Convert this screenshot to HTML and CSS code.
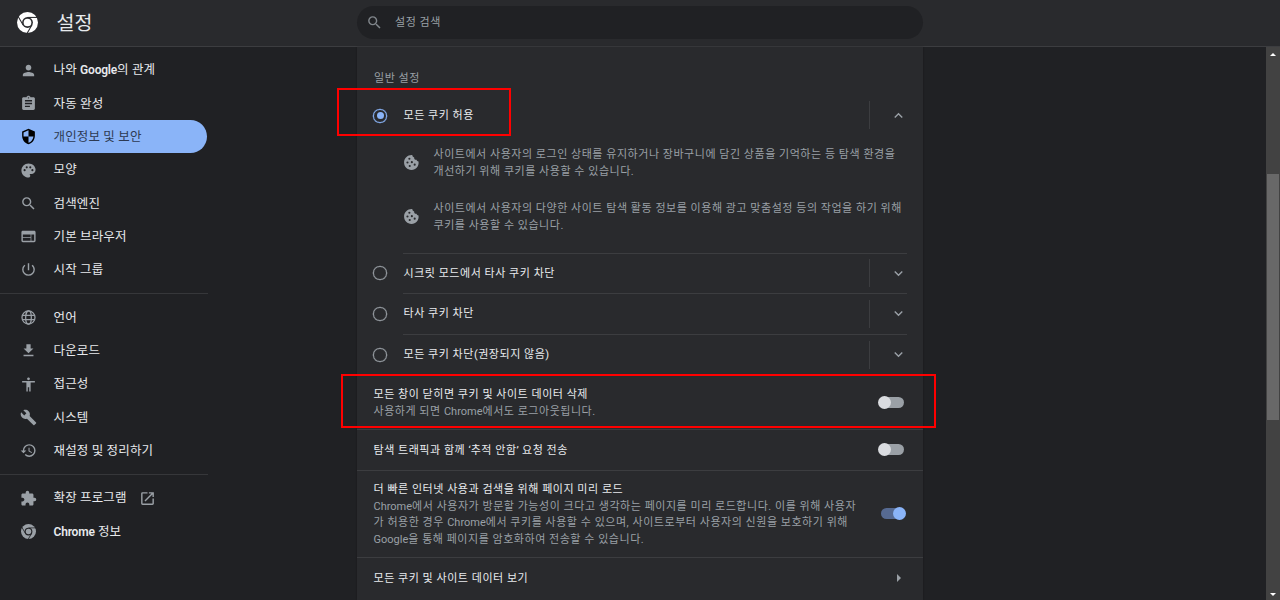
FILE: index.html
```html
<!DOCTYPE html>
<html lang="ko">
<head>
  <meta charset="utf-8" />
  <title>설정</title>
  <link rel="stylesheet" href="styles.css">
</head>
<body>
  <svg class="defs" width="0" height="0">
    <symbol id="chrome" viewBox="0 0 24 24">
      <mask id="seams">
        <circle cx="12" cy="12" r="12" fill="#fff"/>
        <g stroke="#000" stroke-width="1.200">
          <path d="M12 6.200H24"/>
          <path d="M12 6.200H24" transform="rotate(120 12 12)"/>
          <path d="M12 6.200H24" transform="rotate(240 12 12)"/>
        </g>
        <circle cx="12" cy="12" r="6.200" fill="#000"/>
        <circle cx="12" cy="12" r="4.400" fill="#fff"/>
      </mask>
      <rect width="24" height="24" mask="url(#seams)"/>
    </symbol>
    <symbol id="search" viewBox="0 0 24 24"><path d="M15.5 14h-.79l-.28-.27A6.471 6.471 0 0 0 16 9.5 6.5 6.5 0 1 0 9.5 16c1.61 0 3.09-.59 4.23-1.57l.27.28v.79l5 4.99L20.49 19l-4.99-5zm-6 0C7.01 14 5 11.99 5 9.5S7.01 5 9.5 5 14 7.01 14 9.5 11.99 14 9.5 14z"/></symbol>
    <symbol id="cookie" viewBox="0 0 24 24"><path fill-rule="evenodd" d="M21.9 10.5c-1.3 0-2.5-.9-2.8-2.3-2 .4-3.7-1.300-3.300-3.300-1.700-.3-2.800-1.700-2.600-3.400C6.900.9 1.500 5.800 1.500 12c0 5.800 4.700 10.500 10.500 10.500 6.100 0 11-5.400 9.900-12zM9 5.200a1.500 1.500 0 1 1 0 3 1.500 1.500 0 0 1 0-3zM6.300 10.500a1.500 1.500 0 1 1 0 3 1.500 1.500 0 0 1 0-3zM12.500 10a1.500 1.500 0 1 1 0 3 1.500 1.500 0 0 1 0-3zM9.500 15.500a1.500 1.500 0 1 1 0 3 1.500 1.500 0 0 1 0-3zM16.500 13.500a1.500 1.500 0 1 1 0 3 1.500 1.500 0 0 1 0-3z"/></symbol>
    <symbol id="down" viewBox="0 0 24 24"><path d="M16.590 8.590 12 13.170 7.410 8.590 6 10l6 6 6-6z"/></symbol>
  </svg>

  <header class="toolbar">
    <div class="brand">
      <svg class="logo"><use href="#chrome"/></svg>
      <h1>설정</h1>
    </div>
    <div class="search">
      <svg class="icon"><use href="#search"/></svg>
      <span>설정 검색</span>
    </div>
  </header>

  <div class="container">
    <nav class="menu">
      <a class="item"><svg class="icon" viewBox="0 0 24 24"><path d="M12 12c2.210 0 4-1.790 4-4s-1.790-4-4-4-4 1.790-4 4 1.790 4 4 4zm0 2c-2.670 0-8 1.340-8 4v2h16v-2c0-2.660-5.330-4-8-4z"/></svg><span>나와 <b>Google</b>의 관계</span></a>
      <a class="item"><svg class="icon" viewBox="0 0 24 24"><path d="M19 3h-4.180C14.400 1.840 13.300 1 12 1s-2.400.84-2.820 2H5c-1.100 0-2 .9-2 2v14c0 1.100.9 2 2 2h14c1.100 0 2-.9 2-2V5c0-1.100-.9-2-2-2zm-7 0c.55 0 1 .45 1 1s-.45 1-1 1-1-.45-1-1 .45-1 1-1zm2 14H7v-2h7v2zm3-4H7v-2h10v2zm0-4H7V7h10v2z"/></svg><span>자동 완성</span></a>
      <a class="item selected"><svg class="icon" viewBox="0 0 24 24"><path d="M12 1 3 5v6c0 5.550 3.840 10.740 9 12 5.160-1.260 9-6.450 9-12V5l-9-4zm0 10.990h7c-.53 4.120-3.280 7.790-7 8.940V12H5V6.300l7-3.110v8.800z"/></svg><span>개인정보 및 보안</span></a>
      <a class="item"><svg class="icon" viewBox="0 0 24 24"><path d="M12 2C6.490 2 2 6.490 2 12s4.490 10 10 10c1.380 0 2.500-1.120 2.500-2.500 0-.61-.23-1.200-.64-1.670-.08-.1-.13-.21-.13-.33 0-.28.22-.5.5-.5H16c3.310 0 6-2.690 6-6 0-4.960-4.490-9-10-9zM6.500 13a1.500 1.500 0 1 1 0-3 1.500 1.500 0 0 1 0 3zm3-4a1.500 1.500 0 1 1 0-3 1.500 1.500 0 0 1 0 3zm5 0a1.500 1.500 0 1 1 0-3 1.500 1.500 0 0 1 0 3zm3 4a1.500 1.500 0 1 1 0-3 1.500 1.500 0 0 1 0 3z"/></svg><span>모양</span></a>
      <a class="item"><svg class="icon"><use href="#search"/></svg><span>검색엔진</span></a>
      <a class="item"><svg class="icon" viewBox="0 0 24 24"><path d="M20 4H4c-1.100 0-1.990.9-1.990 2L2 18c0 1.100.9 2 2 2h16c1.100 0 2-.9 2-2V6c0-1.100-.9-2-2-2zm-5 14H4v-4h11v4zm0-5H4V9h11v4zm5 5h-4V9h4v9z"/></svg><span>기본 브라우저</span></a>
      <a class="item"><svg class="icon" viewBox="0 0 24 24"><path d="M13 3h-2v10h2V3zm4.830 2.170-1.420 1.420A6.920 6.920 0 0 1 19 12c0 3.870-3.130 7-7 7s-7-3.130-7-7c0-2.190 1.010-4.140 2.580-5.420L6.170 5.170A8.932 8.932 0 0 0 3 12a9 9 0 0 0 18 0c0-2.740-1.230-5.180-3.170-6.830z"/></svg><span>시작 그룹</span></a>
      <div class="separator"></div>
      <a class="item"><svg class="icon" viewBox="0 0 24 24"><g fill="none" stroke="currentColor" stroke-width="1.800"><circle cx="12" cy="12" r="9.200"/><ellipse cx="12" cy="12" rx="4" ry="9.200"/><path d="M3.500 9h17M3.500 15h17"/></g></svg><span>언어</span></a>
      <a class="item"><svg class="icon" viewBox="0 0 24 24"><path d="M19 9h-4V3H9v6H5l7 7 7-7zM5 18v2h14v-2H5z"/></svg><span>다운로드</span></a>
      <a class="item"><svg class="icon" viewBox="0 0 24 24"><path d="M12 2c1.100 0 2 .9 2 2s-.9 2-2 2-2-.9-2-2 .9-2 2-2zm9 7h-6v13h-2v-6h-2v6H9V9H3V7h18v2z"/></svg><span>접근성</span></a>
      <a class="item"><svg class="icon" viewBox="0 0 24 24"><path d="m22.700 19-9.100-9.100c.9-2.300.4-5-1.500-6.900-2-2-5-2.400-7.400-1.300L9 6 6 9 1.600 4.700C.4 7.100.9 10.100 2.900 12.100c1.900 1.900 4.600 2.400 6.900 1.500l9.100 9.100c.4.4 1 .4 1.400 0l2.300-2.300c.5-.4.5-1.100.1-1.400z"/></svg><span>시스템</span></a>
      <a class="item"><svg class="icon" viewBox="0 0 24 24"><path d="M13 3a9 9 0 0 0-9 9H1l3.890 3.890.07.14L9 12H6c0-3.870 3.130-7 7-7s7 3.130 7 7-3.130 7-7 7c-1.930 0-3.680-.79-4.940-2.060l-1.420 1.420A8.954 8.954 0 0 0 13 21a9 9 0 0 0 0-18zm-1 5v5l4.280 2.540.72-1.210-3.500-2.080V8H12z"/></svg><span>재설정 및 정리하기</span></a>
      <div class="separator"></div>
      <a class="item"><svg class="icon" viewBox="0 0 24 24"><path d="M20.500 11H19V7c0-1.100-.9-2-2-2h-4V3.500a2.500 2.500 0 0 0-5 0V5H4c-1.100 0-1.990.9-1.990 2v3.800H3.500c1.490 0 2.700 1.210 2.700 2.700s-1.210 2.700-2.700 2.700H2V20c0 1.100.9 2 2 2h3.800v-1.500c0-1.490 1.210-2.700 2.700-2.700s2.700 1.210 2.700 2.700V22H17c1.100 0 2-.9 2-2v-4h1.500a2.500 2.500 0 0 0 0-5z"/></svg><span>확장 프로그램</span><svg class="icon launch" viewBox="0 0 24 24"><path d="M19 19H5V5h7V3H5a2 2 0 0 0-2 2v14a2 2 0 0 0 2 2h14c1.100 0 2-.9 2-2v-7h-2v7zM14 3v2h3.590l-9.830 9.830 1.410 1.410L19 6.410V10h2V3h-7z"/></svg></a>
      <a class="item"><svg class="icon product"><use href="#chrome"/></svg><span><b>Chrome</b> 정보</span></a>
    </nav>

    <main class="card">
      <h2>일반 설정</h2>

      <div class="option first">
        <span class="radio checked"></span>
        <div class="option-body"><span>모든 쿠키 허용</span><div class="expand"><svg class="icon up"><use href="#down"/></svg></div></div>
      </div>
      <div class="details">
        <div class="detail"><svg class="icon"><use href="#cookie"/></svg><p>사이트에서 사용자의 로그인 상태를 유지하거나 장바구니에 담긴 상품을 기억하는 등 탐색 환경을<br>개선하기 위해 쿠키를 사용할 수 있습니다.</p></div>
        <div class="detail"><svg class="icon"><use href="#cookie"/></svg><p>사이트에서 사용자의 다양한 사이트 탐색 활동 정보를 이용해 광고 맞춤설정 등의 작업을 하기 위해<br>쿠키를 사용할 수 있습니다.</p></div>
      </div>
      <div class="option">
        <span class="radio"></span>
        <div class="option-body"><span>시크릿 모드에서 타사 쿠키 차단</span><div class="expand"><svg class="icon"><use href="#down"/></svg></div></div>
      </div>
      <div class="option">
        <span class="radio"></span>
        <div class="option-body"><span>타사 쿠키 차단</span><div class="expand"><svg class="icon"><use href="#down"/></svg></div></div>
      </div>
      <div class="option last">
        <span class="radio"></span>
        <div class="option-body"><span>모든 쿠키 차단(권장되지 않음)</span><div class="expand"><svg class="icon"><use href="#down"/></svg></div></div>
      </div>

      <div class="row clear">
        <div>
          <h3>모든 창이 닫히면 쿠키 및 사이트 데이터 삭제</h3>
          <p>사용하게 되면 <i>Chrome</i>에서도 로그아웃됩니다.</p>
        </div>
        <span class="toggle"></span>
      </div>
      <div class="row track">
        <h3>탐색 트래픽과 함께 <i>‘</i>추적 안함<i>’</i> 요청 전송</h3>
        <span class="toggle"></span>
      </div>
      <div class="row preload">
        <div>
          <h3>더 빠른 인터넷 사용과 검색을 위해 페이지 미리 로드</h3>
          <p><i>Chrome</i>에서 사용자가 방문할 가능성이 크다고 생각하는 페이지를 미리 로드합니다. 이를 위해 사용자<br>가 허용한 경우 <i>Chrome</i>에서 쿠키를 사용할 수 있으며, 사이트로부터 사용자의 신원을 보호하기 위해<br><i>Google</i>을 통해 페이지를 암호화하여 전송할 수 있습니다.</p>
        </div>
        <span class="toggle on"></span>
      </div>
      <div class="row link">
        <h3>모든 쿠키 및 사이트 데이터 보기</h3>
        <svg class="arrow" viewBox="0 0 4 8"><path d="M0 0 4 4 0 8z"/></svg>
      </div>
    </main>

    <div class="scrollbar">
      <svg class="scroll-arrow" viewBox="0 0 6 3"><path d="M0 3 3 0 6 3z"/></svg>
      <div class="thumb"></div>
      <svg class="scroll-arrow" viewBox="0 0 6 3"><path d="M0 0 3 3 6 0z"/></svg>
    </div>
  </div>

  <div class="mark mark-allow"></div>
  <div class="mark mark-clear"></div>
</body>
</html>
```
FILE: styles.css
```css
* {
  box-sizing: border-box;
}
body {
  margin: 0;
  height: 600px;
  overflow: hidden;
  position: relative;
  background: #202124;
  color: #e8eaed;
  font-family: Roboto, "Noto Sans CJK KR", sans-serif;
  font-size: 11px;
  line-height: 16.6px;
  letter-spacing: 0.53px;
}
h1, h2, h3, p {
  margin: 0;
  font-size: inherit;
  font-weight: normal;
}
i {
  font-style: normal;
  letter-spacing: 0;
}
.defs {
  position: absolute;
}
.icon {
  width: 17px;
  height: 17px;
  flex: none;
  fill: currentColor;
  color: #9aa0a6;
}

/* toolbar */
.toolbar {
  display: flex;
  height: 47px;
  background: #292a2d;
  border-bottom: 1px solid #3c3d40;
}
.brand {
  display: flex;
  align-items: center;
  width: 357px;
  padding-left: 17px;
}
.logo {
  width: 21px;
  height: 21px;
  margin-bottom: 1px;
  fill: #fff;
}
.brand h1 {
  margin-left: 18.500px;
  padding-top: 2px;
  font-size: 19.500px;
  line-height: 28px;
  letter-spacing: 0;
}
.search {
  display: flex;
  align-items: center;
  width: 566px;
  height: 33px;
  margin-top: 6px;
  padding-left: 9px;
  border-radius: 17px;
  background: #202124;
  color: #9aa0a6;
}
.search .icon {
  color: #80868b;
}
.search span {
  margin-left: 12px;
  padding-top: 2px;
}

.container {
  display: flex;
  height: 553px;
}

/* left menu */
.menu {
  width: 357px;
  padding-top: 6.500px;
  font-size: 12.500px;
  letter-spacing: 0.15px;
}
.item {
  display: flex;
  align-items: center;
  width: 207px;
  height: 33.300px;
  padding-left: 20px;
}
.item span {
  margin-left: 16.500px;
  padding-top: 1px;
}
.item b {
  font-size: 12px;
  font-weight: 600;
  letter-spacing: -0.2px;
}
.item .launch {
  margin-left: 12px;
}
.item .product {
  width: 15px;
  height: 15px;
  margin: 0 1px;
}
.selected {
  background: #8ab4f8;
  border-radius: 0 17px 17px 0;
  color: #2d3a52;
}
.selected .icon {
  color: #000;
}
.separator {
  width: 208px;
  height: 1px;
  margin: 6.600px 0;
  background: #36373a;
}

/* settings card */
.card {
  width: 566px;
  background: #292a2d;
  box-shadow: 0 0 2px rgba(0, 0, 0, 0.3);
}
.card h2 {
  padding: 24px 17px 0;
  height: 48px;
  color: #9aa0a6;
}
.option {
  display: flex;
  align-items: center;
  height: 40.400px;
  padding: 0 16px;
}
.radio {
  display: flex;
  width: 14px;
  height: 14px;
  border: 1.500px solid #9aa0a6;
  border-radius: 50%;
  box-shadow: 0 0 0 0.300px #9aa0a6;
}
.checked {
  border-color: #8ab4f8;
  box-shadow: 0 0 0 0.300px #8ab4f8;
}
.checked::before {
  content: "";
  width: 7px;
  height: 7px;
  margin: auto;
  border-radius: 50%;
  background: #8ab4f8;
}
.option-body {
  display: flex;
  flex: 1;
  align-items: center;
  justify-content: space-between;
  height: 100%;
  margin-left: 16px;
  border-top: 1px solid #3c3d40;
}
.option-body > span {
  padding: 1px 0 0 0.500px;
}
.first {
  height: 41px;
}
.first .option-body {
  border-top: none;
}
.first .option-body > span {
  padding-top: 2px;
}
.last {
  height: 41.700px;
}
.expand {
  display: flex;
  align-items: center;
  justify-content: flex-end;
  width: 38px;
  height: 28px;
  margin-bottom: 1px;
  border-left: 1px solid #3c3d40;
}
.up {
  transform: rotate(180deg);
}
.details {
  height: 117px;
  padding: 10px 0 0 46px;
  color: #9aa0a6;
}
.detail {
  display: flex;
  align-items: center;
  height: 33px;
  margin-bottom: 20.500px;
}
.detail p {
  margin-left: 13.500px;
  padding-top: 3px;
  white-space: nowrap;
}

.row {
  display: flex;
  align-items: center;
  justify-content: space-between;
  padding: 0 17px 0 16.500px;
  border-bottom: 1px solid #3c3d40;
}
.row p {
  color: #9aa0a6;
  white-space: nowrap;
}
.row > div,
.row > h3 {
  padding-top: 2px;
}
.clear {
  height: 54.500px;
}
.clear > div {
  padding-top: 3px;
}
.track {
  height: 41px;
}
.preload {
  height: 87px;
}
.preload > div {
  padding-top: 3px;
}
.link {
  height: 40px;
  border-bottom: none;
}
.toggle {
  display: flex;
  align-items: center;
  width: 24px;
  height: 11px;
  margin-right: 2px;
  border-radius: 6px;
  background: #9aa0a6;
}
.toggle::before {
  content: "";
  flex: none;
  width: 13px;
  height: 13px;
  margin-left: -2px;
  border-radius: 50%;
  background: #dadce0;
}
.on {
  margin-right: 1px;
  background: #566a92;
}
.on::before {
  margin-left: 12px;
  background: #8ab4f8;
}
.arrow {
  width: 4px;
  height: 8px;
  margin-right: 5px;
  fill: #9aa0a6;
}

.scrollbar {
  display: flex;
  flex-direction: column;
  align-items: center;
  justify-content: space-between;
  width: 14px;
  margin-left: auto;
  padding: 6px 0 4px;
  background: #424242;
}
.thumb {
  width: 12px;
  height: 246px;
  margin-top: -55px;
  background: #686868;
}
.scroll-arrow {
  width: 6px;
  height: 3px;
  fill: #fff;
}

/* highlight frames */
.mark {
  position: absolute;
  border: 2px solid #ff0000;
}
.mark-allow {
  left: 337px;
  top: 88px;
  width: 174px;
  height: 48px;
}
.mark-clear {
  left: 341px;
  top: 374px;
  width: 595px;
  height: 54px;
}
```
